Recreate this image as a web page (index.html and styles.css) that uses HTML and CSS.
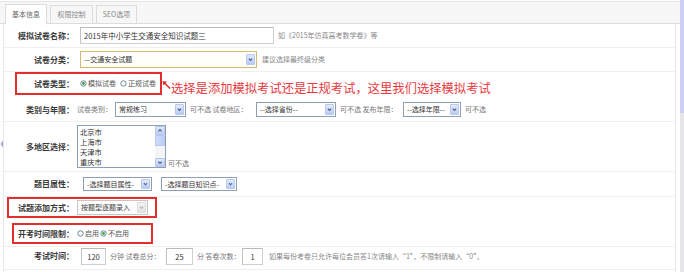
FILE: index.html
```html
<!DOCTYPE html>
<html>
<head>
<meta charset="utf-8">
<title>基本信息</title>
<link rel="stylesheet" href="styles.css">
</head>
<body>
<div class="page">
  <div class="main">
    <div class="tabbar">
      <div class="tab active t1">基本信息</div>
      <div class="tab t2">权限控制</div>
      <div class="tab t3">SEO选项</div>
    </div>
    <div class="body">
      <div class="gutter">
        <svg class="handle" width="3" height="8" viewBox="0 0 3 8"><path d="M3 0.5 L0.5 4 L3 7.5 Z"/></svg>
      </div>
      <div class="panel">
        <div class="row r1">
          <div class="label">模拟试卷名称：</div>
          <div class="inp w-name">2015年中小学生交通安全知识试题三</div>
          <span class="hint h-name">如《2015年仿真高考数学卷》等</span>
        </div>

        <div class="row r2">
          <div class="label">试卷分类：</div>
          <div class="sel focus w-cat"><span>—交通安全试题</span><span class="arrow"><svg viewBox="0 0 9 11"><path d="M2.3 4.3 L4.5 6.6 L6.7 4.3"/></svg></span></div>
          <span class="hint h-cat">建议选择最终级分类</span>
        </div>

        <div class="row r3">
          <div class="box box-type">
            <div class="label l-type">试卷类型：</div>
            <span class="radio"><svg viewBox="0 0 8 8"><circle class="ring" cx="4" cy="4" r="3.1"/><circle class="dot" cx="4" cy="4" r="1.6"/></svg>模拟试卷</span>
            <span class="radio r-second"><svg viewBox="0 0 8 8"><circle class="ring" cx="4" cy="4" r="3.1"/></svg>正规试卷</span>
          </div>
          <svg class="pointer" width="9" height="10" viewBox="0 0 9 10"><path class="shaft" d="M8 8.5 L2 2.5"/><path class="head" d="M0.5 1 L5 1.8 L1.4 5.4 Z"/></svg>
          <span class="note">选择是添加模拟考试还是正规考试，这里我们选择模拟考试</span>
        </div>

        <div class="row r4">
          <div class="label">类别与年限：</div>
          <span class="t w-t1">试卷类别：</span>
          <div class="sel s15 w-s1"><span>常规练习</span><span class="arrow"><svg viewBox="0 0 9 11"><path d="M2.3 4.3 L4.5 6.6 L6.7 4.3"/></svg></span></div>
          <span class="t w-t2">可不选 试卷地区：</span>
          <div class="sel s15 w-s2"><span>--选择省份--</span><span class="arrow"><svg viewBox="0 0 9 11"><path d="M2.3 4.3 L4.5 6.6 L6.7 4.3"/></svg></span></div>
          <span class="t w-t3">可不选 发布年限：</span>
          <div class="sel s15 w-s3"><span>--选择年限--</span><span class="arrow"><svg viewBox="0 0 9 11"><path d="M2.3 4.3 L4.5 6.6 L6.7 4.3"/></svg></span></div>
          <span class="t w-t4">可不选</span>
        </div>

        <div class="row r5">
          <div class="label">多地区选择：</div>
          <div class="listbox">
            <div class="items">
              <div>北京市</div>
              <div>上海市</div>
              <div>天津市</div>
              <div>重庆市</div>
            </div>
            <div class="lscroll">
              <span class="sbtn"><svg viewBox="0 0 9 9"><path d="M2.3 5.6 L4.5 3.4 L6.7 5.6"/></svg></span>
              <span class="sthumb"></span>
              <span class="strack"></span>
              <span class="sbtn"><svg viewBox="0 0 9 9"><path d="M2.3 3.4 L4.5 5.6 L6.7 3.4"/></svg></span>
            </div>
          </div>
          <span class="t multi-hint">可不选</span>
        </div>

        <div class="row r6">
          <div class="label">题目属性：</div>
          <div class="sel s14 w-a1"><span>-选择题目属性-</span><span class="arrow"><svg viewBox="0 0 9 11"><path d="M2.3 4.3 L4.5 6.6 L6.7 4.3"/></svg></span></div>
          <div class="sel s14 w-a2"><span>-选择题目知识点-</span><span class="arrow"><svg viewBox="0 0 9 11"><path d="M2.3 4.3 L4.5 6.6 L6.7 4.3"/></svg></span></div>
        </div>

        <div class="row r7">
          <div class="box box-add">
            <div class="label l-add">试题添加方式：</div>
            <div class="sel disabled w-add"><span>按题型逐题录入</span><span class="arrow"><svg viewBox="0 0 9 11"><path d="M2.3 4.3 L4.5 6.6 L6.7 4.3"/></svg></span></div>
          </div>
        </div>

        <div class="row r8">
          <div class="box box-time">
            <div class="label l-time">开考时间限制：</div>
            <span class="radio r-first"><svg viewBox="0 0 8 8"><circle class="ring" cx="4" cy="4" r="3.1"/></svg>启用</span>
            <span class="radio r-tight"><svg viewBox="0 0 8 8"><circle class="ring" cx="4" cy="4" r="3.1"/><circle class="dot" cx="4" cy="4" r="1.6"/></svg>不启用</span>
          </div>
        </div>

        <div class="row r9">
          <div class="label">考试时间：</div>
          <div class="inp num w-n1">120</div>
          <span class="t w-u1">分钟 试卷总分：</span>
          <div class="inp num w-n2">25</div>
          <span class="t w-u2">分 答卷次数：</span>
          <div class="inp num w-n3">1</div>
          <span class="t hint-times">如果每份考卷只允许每位会员答1次请输入“1”，不限制请输入“0”。</span>
        </div>
      </div>
    </div>
  </div>
  <div class="vscroll"><div class="vthumb"></div></div>
</div>
</body>
</html>
```

FILE: styles.css
```css
* { box-sizing: border-box; }
html, body { margin: 0; padding: 0; }
body {
  width: 684px;
  height: 272px;
  overflow: hidden;
  background: #ffffff;
  font-family: "Noto Sans CJK SC", "Liberation Sans", sans-serif;
  font-size: 7px;
  line-height: 1.2;
  color: #666;
}
.page { display: flex; width: 684px; height: 272px; }
.main { width: 680px; display: flex; flex-direction: column; }
.vscroll { width: 4px; display: flex; flex-direction: column; background: #e6e6e8; }
.vthumb { height: 113px; background: #cbd0f3; }

/* tabs */
.tabbar {
  margin-top: 1px;
  height: 23px;
  border-top: 1px solid #e4e4e4;
  border-bottom: 1px solid #dddddd;
  background: #f7f7f7;
  display: flex;
  align-items: flex-end;
  gap: 3px;
  padding-left: 5px;
  flex: none;
}
.tab {
  height: 18px;
  border: 1px solid #dcdcdc;
  border-bottom: none;
  display: flex;
  align-items: center;
  justify-content: center;
  color: #888;
  font-size: 7px;
  background: #f7f7f7;
}
.tab.active { height: 20px; margin-bottom: -1px; background: #fff; color: #666; }
.t1 { width: 42px; }
.t2 { width: 43px; }
.t3 { width: 41px; }

/* body */
.body { display: flex; flex: 1; }
.gutter { width: 3px; flex: none; }
.handle { display: block; margin-top: 116px; }
.handle path { fill: #9aaac0; }
.panel {
  width: 673px;
  border-left: 1px solid #e8e8e8;
  border-right: 1px solid #e8e8e8;
  display: flex;
  flex-direction: column;
  flex: none;
}
.row {
  display: flex;
  align-items: center;
  border-bottom: 1px solid #efefef;
  flex: none;
}
.r1 { height: 24px; }
.r2 { height: 24px; }
.r3 { height: 26px; border-bottom: none; align-items: flex-start; }
.r4 { height: 24px; }
.r5 { height: 50px; }
.r6 { height: 25px; }
.r7 { height: 23px; border-bottom: none; align-items: flex-start; }
.r8 { height: 27px; align-items: flex-start; }
.r9 { height: 23px; align-items: flex-start; }

.label {
  width: 73px;
  padding-right: 3px;
  text-align: right;
  font-weight: bold;
  font-size: 8px;
  color: #3a3a3a;
  white-space: nowrap;
  flex: none;
}
.t { white-space: nowrap; color: #777; flex: none; }
.hint { white-space: nowrap; color: #888; }

/* annotation boxes */
.box {
  display: flex;
  align-items: center;
  border: 2px solid #e22e2e;
  flex: none;
}
.box-type { margin-left: 11px; width: 147px; height: 23px; }
.l-type { width: 60px; }
.box-add { margin-left: 3px; width: 150px; height: 21px; }
.l-add { width: 68px; }
.box-time { margin-left: 8px; width: 141px; height: 21px; margin-top: 3px; }
.l-time { width: 63px; }

.pointer { flex: none; margin-top: 8px; }
.pointer .shaft { stroke: #e23030; stroke-width: 1.6; fill: none; }
.pointer .head { fill: #e23030; }
.note {
  font-size: 12.3px;
  line-height: 14px;
  color: #e8393e;
  white-space: nowrap;
  margin-top: 9px;
  margin-left: 0;
}

/* inputs */
.inp {
  height: 17px;
  border: 1px solid #cfcfcf;
  border-top-color: #b9b9b9;
  border-left-color: #c2c2c2;
  background: #fff;
  font-size: 7.5px;
  color: #333;
  display: flex;
  align-items: center;
  padding-left: 3px;
  white-space: nowrap;
  flex: none;
}
.inp.num { justify-content: center; padding-left: 0; font-size: 7.5px; margin-top: 1px; }
.w-name { margin-left: 3px; width: 194px; }
.h-name { margin-left: 4px; }
.w-n1 { margin-left: 4px; width: 25px; }
.w-u1 { margin-left: 4px; width: 56px; margin-top: 5px; }
.w-n2 { width: 27px; }
.w-u2 { margin-left: 4px; width: 45px; margin-top: 5px; }
.w-n3 { width: 21px; }
.hint-times { margin-left: 6px; margin-top: 5px; color: #888; }
.r9 .label { margin-top: 4px; }

/* selects */
.sel {
  display: flex;
  align-items: center;
  justify-content: space-between;
  height: 17px;
  border: 1px solid #8d9fb5;
  background: #fff;
  padding-left: 3px;
  color: #333;
  font-size: 7px;
  white-space: nowrap;
  flex: none;
}
.sel .arrow {
  width: 9px;
  height: 11px;
  margin-right: 1px;
  border: 1px solid #b7c8ee;
  border-radius: 1px;
  background: linear-gradient(#e3ebfd, #b9cbf6);
  display: flex;
  flex: none;
}
.sel .arrow svg { width: 100%; height: 100%; display: block; }
.sel .arrow path { fill: none; stroke: #4a5f88; stroke-width: 1.4; }
.sel.focus { border-color: #d8bb72; background: #fffef9; }
.s15 { height: 15px; }
.s15 .arrow { height: 11px; }
.s14 { height: 14px; }
.s14 .arrow { height: 10px; }
.w-cat { margin-left: 3px; width: 177px; }
.h-cat { margin-left: 5px; }

.w-t1 { width: 38px; }
.w-s1 { width: 71px; }
.w-t2 { margin-left: 4px; width: 66px; }
.w-s2 { width: 80px; }
.w-t3 { margin-left: 4px; width: 63px; }
.w-s3 { width: 58px; }
.w-t4 { margin-left: 4px; }

.w-a1 { margin-left: 6px; width: 69px; }
.w-a2 { margin-left: 9px; width: 76px; }

.sel.disabled { border-color: #c6c6c6; background: #fbfbfb; color: #444; height: 15px; }
.sel.disabled .arrow { border-color: #dcdcdc; background: linear-gradient(#f4f4f4, #e2e2e2); height: 11px; }
.sel.disabled .arrow path { stroke: #b8b8b8; }
.w-add { width: 71px; }

/* radios */
.radio {
  display: flex;
  align-items: center;
  white-space: nowrap;
  color: #555;
  font-size: 7px;
  flex: none;
}
.radio svg { width: 7px; height: 7px; margin-right: 1px; display: block; }
.radio .ring { fill: #fbfbfb; stroke: #4f6a86; stroke-width: 0.9; }
.radio .dot { fill: #3aa83a; }
.box-type .radio { margin-left: 3px; }
.box-type .r-second { margin-left: 4px; }
.box-time .r-first { margin-left: 0; }
.box-time .r-tight { margin-left: 1px; }

/* listbox */
.listbox {
  display: flex;
  width: 89px;
  height: 43px;
  border: 1px solid #8d9fb5;
  background: #fff;
  flex: none;
}
.items {
  flex: 1;
  padding: 1px 0 0 2px;
  font-size: 7.3px;
  line-height: 10px;
  color: #333;
  overflow: hidden;
}
.lscroll {
  width: 10px;
  display: flex;
  flex-direction: column;
  background: #f4f4f6;
}
.sbtn {
  height: 9px;
  border: 1px solid #b7c8ee;
  border-radius: 1px;
  background: linear-gradient(#e3ebfd, #b9cbf6);
  display: flex;
}
.sbtn svg { width: 100%; height: 100%; display: block; }
.sbtn path { fill: none; stroke: #4a5f88; stroke-width: 1.4; }
.sthumb {
  height: 11px;
  border: 1px solid #b7c8ee;
  background: linear-gradient(90deg, #cfdcfb, #bccdf6);
}
.strack { flex: 1; }
.multi-hint { margin-left: 2px; align-self: flex-end; margin-bottom: 4px; }
```
